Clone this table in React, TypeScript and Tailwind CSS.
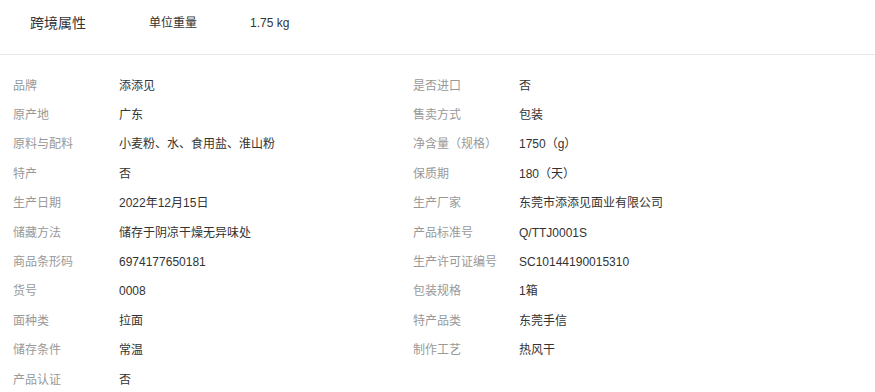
import React from "react";

const left: [string, string][] = [
  ["品牌", "添添见"],
  ["原产地", "广东"],
  ["原料与配料", "小麦粉、水、食用盐、淮山粉"],
  ["特产", "否"],
  ["生产日期", "2022年12月15日"],
  ["储藏方法", "储存于阴凉干燥无异味处"],
  ["商品条形码", "6974177650181"],
  ["货号", "0008"],
  ["面种类", "拉面"],
  ["储存条件", "常温"],
  ["产品认证", "否"],
];

const right: [string, string][] = [
  ["是否进口", "否"],
  ["售卖方式", "包装"],
  ["净含量（规格）", "1750（g）"],
  ["保质期", "180（天）"],
  ["生产厂家", "东莞市添添见面业有限公司"],
  ["产品标准号", "Q/TTJ0001S"],
  ["生产许可证编号", "SC10144190015310"],
  ["包装规格", "1箱"],
  ["特产品类", "东莞手信"],
  ["制作工艺", "热风干"],
];

function Col({ rows }: { rows: [string, string][] }) {
  return (
    <div className="flex flex-col w-[400px] pl-[13px]">
      {rows.map(([k, v]) => (
        <div key={k} className="flex items-center h-[29.4px] text-[12px] leading-none">
          <div className="w-[106px] text-[#999999] whitespace-nowrap">{k}</div>
          <div className="text-[#333333] whitespace-nowrap">{v}</div>
        </div>
      ))}
    </div>
  );
}

export default function App() {
  return (
    <div
      className="w-[875px] h-[392px] bg-white overflow-hidden"
      style={{ fontFamily: '"Liberation Sans", "Noto Sans CJK SC", sans-serif' }}
    >
      <div className="h-[55px] pb-[8px] flex items-center pl-[30px] border-b border-[#e6e6e6]">
        <div className="w-[119px] text-[14px] text-[#333333] leading-none">跨境属性</div>
        <div className="w-[101px] text-[12px] text-[#333333] leading-none">单位重量</div>
        <div className="text-[12px] text-[#333333] leading-none">1.75 kg</div>
      </div>
      <div className="flex pt-[16px]">
        <Col rows={left} />
        <Col rows={right} />
      </div>
    </div>
  );
}
